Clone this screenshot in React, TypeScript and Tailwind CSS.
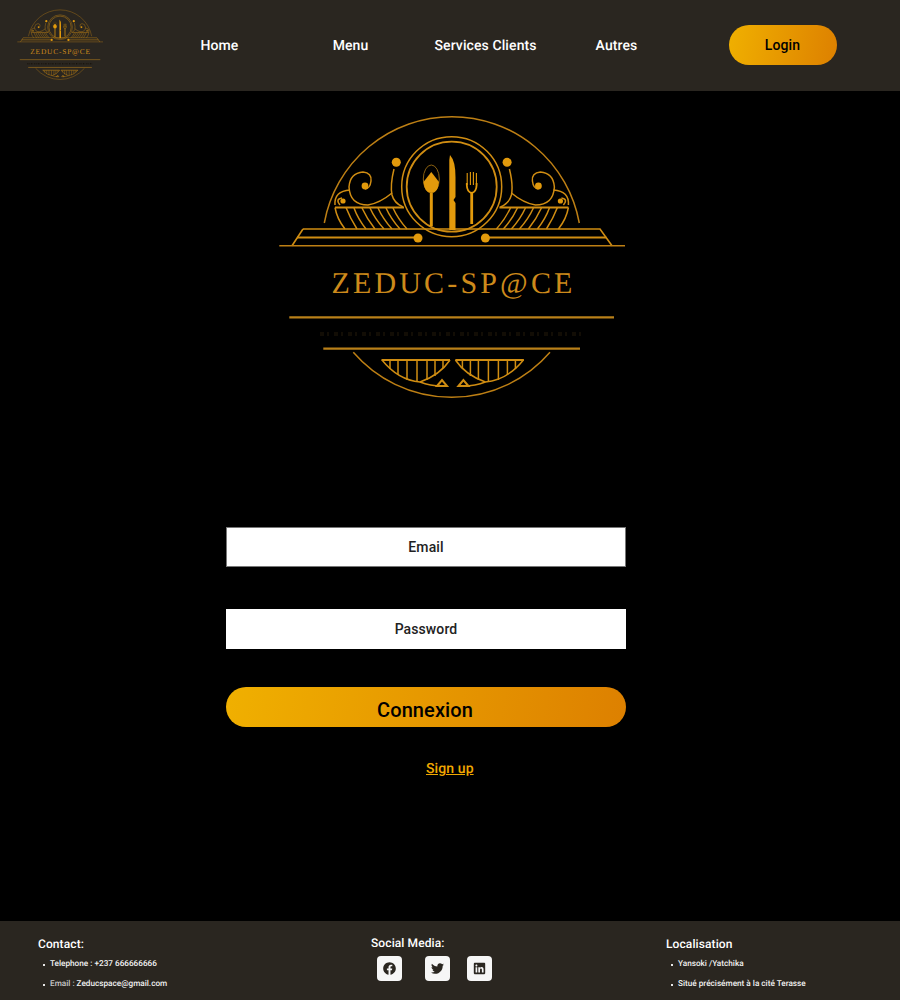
import { FaFacebook, FaTwitter, FaLinkedin } from "react-icons/fa";

function HalfOrnament() {
  const fan = [
    "M76 102.500Q80 113 87 124",
    "M84 103Q88 114 96 124",
    "M92 103Q97 114 105 124",
    "M100 103Q105 114 114 124",
    "M108 103Q113 114 122 124",
    "M116 103Q121 114 130 124",
    "M123 103Q128 114 137 124",
  ];
  return (
    <g fill="none" stroke="#d08d12" strokeWidth="1.500">
      <path d="M65 102.500H134" strokeWidth="1.800" />
      <path d="M65 102.500Q67 114 75 124" />
      {fan.map((d) => (
        <path key={d} d={d} />
      ))}
      <path d="M124 64Q120 80 122 90Q124 98 133 102" />
      <path d="M122 88Q110 98 98 100Q80 100 79 82Q80 68 93 67Q102 68 101 76Q100 84 95 84" />
      <circle cx="95" cy="81" r="3.400" fill="#e29a0c" stroke="none" />
      <path d="M65 100Q64 86 80 85" />
      <path d="M70 100Q65 94 72 93" />
      <circle cx="73" cy="96" r="2.600" fill="#e29a0c" stroke="none" />
      <circle cx="126.300" cy="57.300" r="4.500" fill="#e29a0c" stroke="none" />
      <path d="M27 132.500H148" strokeWidth="1.900" />
      <circle cx="148" cy="133" r="4.500" fill="#e29a0c" stroke="none" />
    </g>
  );
}

function BottomFan() {
  return (
    <g fill="none" stroke="#d08d12" strokeWidth="1.500">
      <path d="M111.500 255H180" strokeWidth="2.200" />
      <path d="M112 255Q128 275 150 277Q170 270 180 255" />
      <path d="M120 256V264M128 256V270M137 256V275M147 256V277M157 256V275M165 256V271M173 256V263" />
      <path d="M150 277Q160 281 172 281" />
      <path d="M167 281L172 275L177 281Z" strokeWidth="2" />
    </g>
  );
}

function Logo({ className }: { className: string }) {
  return (
    <svg viewBox="0 0 365 300" className={className}>
      <path d="M54.300 118A129.600 129.600 0 0 1 309.300 118" fill="none" stroke="#bd7f14" strokeWidth="1.500" />
      <g fill="none" stroke="#d08d12">
        <circle cx="181.700" cy="81.700" r="50" strokeWidth="1.500" />
        <circle cx="181.700" cy="81.700" r="45" strokeWidth="1.800" />
      </g>
      <HalfOrnament />
      <g transform="translate(363.400 0) scale(-1 1)">
        <HalfOrnament />
      </g>
      <path d="M33 124H330L342 140.700M33 124L22 140.700" fill="none" stroke="#d08d12" strokeWidth="1.600" />
      <path d="M9.300 140.700H355" stroke="#bd7f14" strokeWidth="1.600" />

      <g fill="none" stroke="#e29a0c">
        <ellipse cx="161.300" cy="74" rx="8" ry="14" strokeWidth="1" stroke="#8a6010" />
        <path d="M161.300 67L169 77Q168 88 161.300 88Q154.500 88 153.500 77Z" fill="#e29a0c" stroke="none" />
        <path d="M161.300 88V121" strokeWidth="3" />
        <path d="M180 50Q185.500 56 185.500 72V92L183.500 95L185.500 98V125H179.300V55Z" fill="#e29a0c" stroke="none" />
        <path d="M201.700 88V119" strokeWidth="2.800" />
        <path d="M196.800 78V80Q197 87 201.700 88Q206.400 87 206.600 80V78" strokeWidth="1.800" />
        <path d="M197.200 68V80M200.400 67V80M203.400 67V80M206.400 68V80" strokeWidth="1.100" />
      </g>

      <text
        x="61.500"
        y="188.300"
        textLength="241"
        fill="#cd8a1b"
        fontSize="30"
        fontFamily="'Liberation Serif', serif"
      >
        ZEDUC-SP@CE
      </text>
      <path d="M19.300 212.300H344" stroke="#b98019" strokeWidth="2.200" />
      <path d="M50 229H316" stroke="#120d05" strokeWidth="4" strokeDasharray="4 3 2 5" />
      <path d="M53.300 243.700H310" stroke="#b98019" strokeWidth="2.200" />
      <path d="M83.300 247.300A129.900 129.900 0 0 0 280 247.300" fill="none" stroke="#bd7f14" strokeWidth="1.500" />
      <BottomFan />
      <g transform="translate(365.400 0) scale(-1 1)">
        <BottomFan />
      </g>
    </svg>
  );
}

function Bullet({ children }: { children: React.ReactNode }) {
  return (
    <li className="flex items-center h-[9px] text-[8.200px] leading-[9px] font-medium tracking-normal text-[#f2f2f2] whitespace-nowrap">
      <span className="w-[2px] h-[2px] bg-[#e5e5e5] mr-[5px]" />
      {children}
    </li>
  );
}

export default function App() {
  return (
    <div className="w-[900px] h-[1000px] flex flex-col bg-black font-['Roboto',sans-serif] [text-rendering:geometricPrecision] tracking-[0.1px]">
      <header className="h-[91px] bg-[#2a2620] flex items-center text-white text-[14px] font-medium">
        <Logo className="w-[90.500px] h-[74.400px] ml-[15px] mb-[2px] shrink-0" />
        <nav className="flex items-center pt-[1px]">
          <a className="ml-[95px] w-[38px] text-center">Home</a>
          <a className="ml-[94px] w-[36px] text-center">Menu</a>
          <a className="ml-[66px] w-[102px] text-center whitespace-nowrap">Services Clients</a>
          <a className="ml-[59px] w-[42px] text-center">Autres</a>
        </nav>
        <button className="ml-[91px] mb-[1px] w-[108px] h-[40px] rounded-[20px] bg-[linear-gradient(100deg,#f0b000,#dd8000)] text-black text-[14px] font-medium">
          Login
        </button>
      </header>

      <main className="flex-1 flex flex-col">
        <Logo className="w-[365px] h-[300px] ml-[270px] mt-[14px] shrink-0" />
        <form className="w-[400px] ml-[226px] mt-[122px] flex flex-col">
          <input
            placeholder="Email"
            className="h-[40px] bg-white border border-[#777] text-center text-[14px] font-medium placeholder:text-[#222] outline-none"
          />
          <input
            placeholder="Password"
            className="mt-[42px] h-[40px] bg-white text-center text-[14px] font-medium placeholder:text-[#222] outline-none"
          />
          <button
            type="button"
            className="mt-[38px] h-[40px] rounded-[20px] bg-[linear-gradient(100deg,#f0b000,#dd8000)] text-black text-[20px] font-medium pt-[6px] pr-[2px] leading-[34px]"
          >
            Connexion
          </button>
          <a className="mt-[32px] ml-[200px] w-[48px] text-[14px] leading-[20px] font-medium text-[#f0a800] underline whitespace-nowrap">
            Sign up
          </a>
        </form>
      </main>

      <footer className="h-[79px] bg-[#2a2620] flex text-white">
        <div className="w-[371px] pl-[38px] pt-[16px]">
          <h3 className="text-[12px] leading-[14px] font-medium">Contact:</h3>
          <ul className="mt-[9px] ml-[5px] flex flex-col gap-[11px]">
            <Bullet>Telephone : +237 666666666</Bullet>
            <Bullet>
              <span className="text-[#c9c9c9]">Email :&nbsp;</span>Zeducspace@gmail.com
            </Bullet>
          </ul>
        </div>
        <div className="w-[295px] pt-[15px]">
          <h3 className="text-[12px] leading-[14px] font-medium">Social Media:</h3>
          <div className="flex mt-[6px] ml-[6px] text-[#2a2620] text-[13px]">
            <span className="w-[25px] h-[25px] rounded-[4px] bg-[#f6f6f6] flex items-center justify-center">
              <FaFacebook />
            </span>
            <span className="ml-[23px] w-[25px] h-[25px] rounded-[4px] bg-[#f6f6f6] flex items-center justify-center">
              <FaTwitter />
            </span>
            <span className="ml-[17px] w-[25px] h-[25px] rounded-[4px] bg-[#f6f6f6] flex items-center justify-center">
              <FaLinkedin />
            </span>
          </div>
        </div>
        <div className="pt-[16px] flex-1">
          <h3 className="text-[12px] leading-[14px] font-medium">Localisation</h3>
          <ul className="mt-[9px] ml-[5px] flex flex-col gap-[11px]">
            <Bullet>Yansoki /Yatchika</Bullet>
            <Bullet>Situé précisément à la cité Terasse</Bullet>
          </ul>
        </div>
      </footer>
    </div>
  );
}
